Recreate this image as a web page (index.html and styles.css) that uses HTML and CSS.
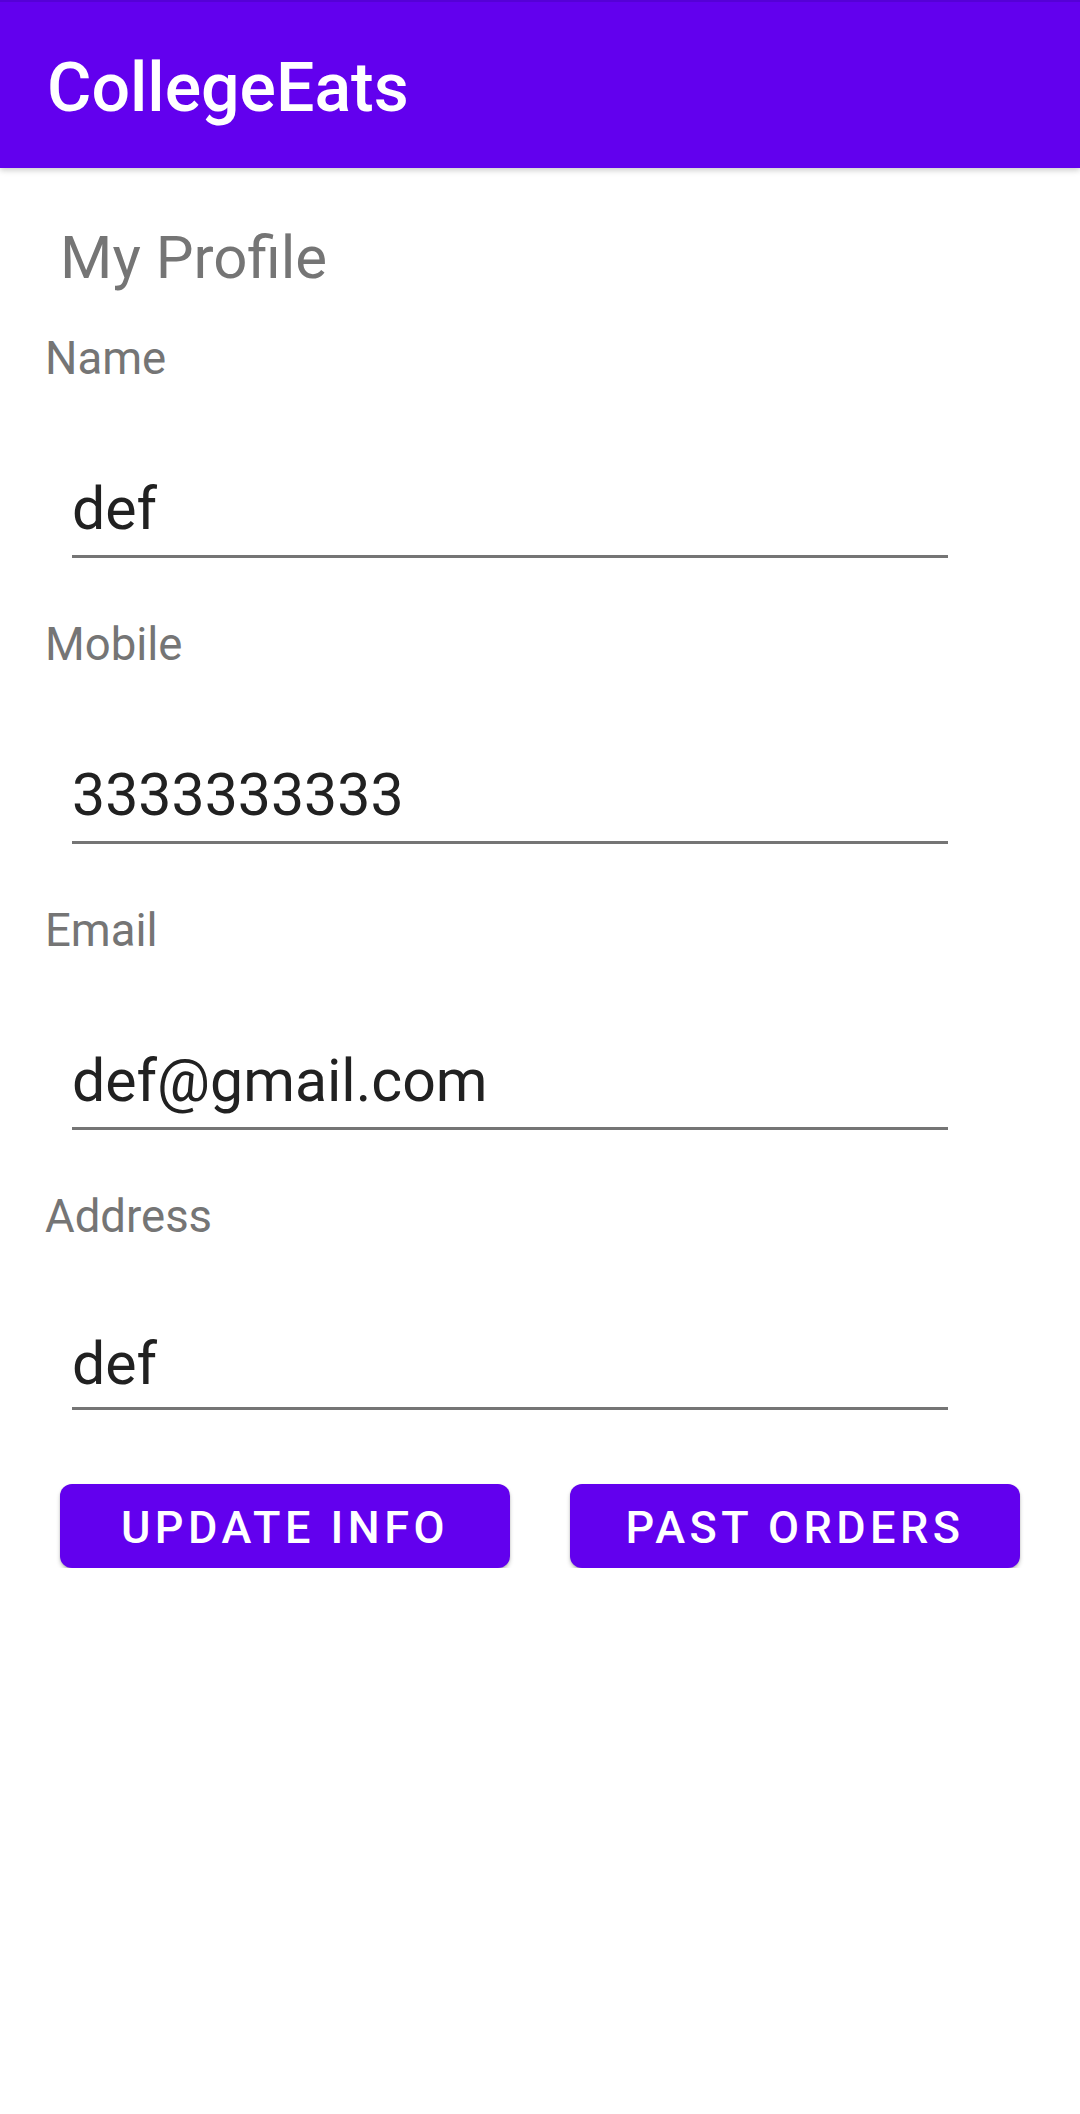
FILE: index.html
```html
<!DOCTYPE html>
<html>
<head>
<meta charset="utf-8">
<link rel="stylesheet" href="styles.css">
</head>
<body>
<header class="appbar">
  <div class="appbar-title">CollegeEats</div>
</header>
<main class="content">
  <h1 class="page-title">My Profile</h1>
  <div class="field">
    <div class="label">Name</div>
    <div class="input"><span class="value">def</span></div>
  </div>
  <div class="field">
    <div class="label">Mobile</div>
    <div class="input"><span class="value">3333333333</span></div>
  </div>
  <div class="field">
    <div class="label">Email</div>
    <div class="input"><span class="value">def@gmail.com</span></div>
  </div>
  <div class="field field-last">
    <div class="label">Address</div>
    <div class="input"><span class="value">def</span></div>
  </div>
  <div class="actions">
    <button class="btn">UPDATE INFO</button>
    <button class="btn">PAST ORDERS</button>
  </div>
</main>
</body>
</html>
```

FILE: styles.css
```css
html, body {
  margin: 0;
  padding: 0;
  background: #ffffff;
  font-family: Roboto, "Noto Sans", sans-serif;
}

.appbar {
  height: 168px;
  box-sizing: border-box;
  background: #6200ee;
  border-top: 2px solid #5500d6;
  display: flex;
  align-items: center;
  padding-left: 47px;
  box-shadow: 0 2px 6px rgba(0, 0, 0, 0.22);
  position: relative;
  z-index: 1;
}

.appbar-title {
  color: #ffffff;
  font-size: 68px;
  font-weight: 500;
  line-height: 80px;
  margin-top: 5px;
}

.content {
  padding-top: 54px;
}

.page-title {
  margin: 0 0 39px 60px;
  font-size: 60px;
  font-weight: 400;
  line-height: 71px;
  color: #757575;
}

.field {
  margin-bottom: 60px;
}

.label {
  margin-left: 45px;
  font-size: 45.5px;
  line-height: 54px;
  color: #757575;
}

.input {
  margin: 88px 0 0 72px;
  width: 876px;
  padding-bottom: 11px;
  border-bottom: 3px solid #757575;
}

.field-last {
  margin-top: 6px;
  margin-bottom: 0;
}

.field-last .input {
  margin-top: 85px;
  padding-bottom: 8px;
}

.value {
  display: block;
  margin-left: 0;
  font-size: 59px;
  line-height: 70px;
  color: #212121;
}

.actions {
  display: flex;
  gap: 60px;
  padding: 0 60px;
  margin-top: 74px;
}

.btn {
  flex: 0 0 450px;
  height: 84px;
  border: none;
  border-radius: 12px;
  background: #6200ee;
  color: #ffffff;
  font-family: Roboto, "Noto Sans", sans-serif;
  font-size: 45px;
  font-weight: 500;
  letter-spacing: 4.5px;
  display: flex;
  align-items: center;
  justify-content: center;
  padding: 3px 0 0 0;
  box-sizing: border-box;
  box-shadow: 0 3px 4px rgba(0, 0, 0, 0.2), 0 1px 2px rgba(0, 0, 0, 0.14);
}
```
